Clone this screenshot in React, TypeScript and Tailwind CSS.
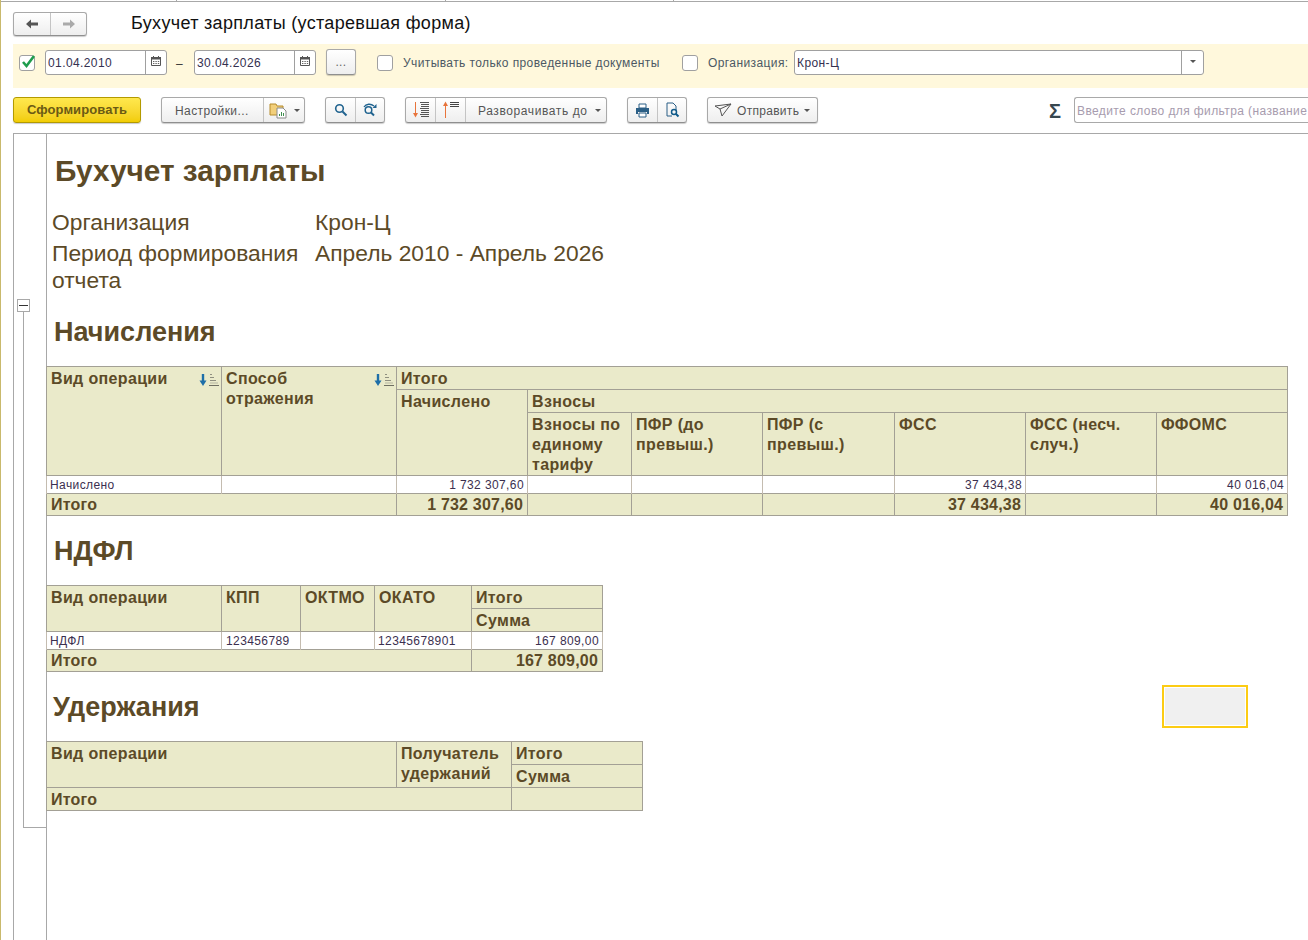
const btn = "flex shrink-0 items-center h-[26px] rounded-[3px] border border-[#a9a9a9] border-b-[#8f8f8f] bg-gradient-to-b from-white to-[#eeeeee] shadow-[0_1px_1px_rgba(0,0,0,0.2)]";
const hcell = "border border-[#a3a095] bg-[#eaeaca] align-top text-left font-bold text-[16px] tracking-[0.35px] leading-[20px] text-[#5c4a27] pl-1 pr-1 pt-[2px]";
const tcell = "border border-[#a3a095] bg-[#eaeaca] font-bold text-[16px] tracking-[0.2px] leading-[20px] text-[#5c4a27] px-1";
const dcell = "border-x border-[#c4bcb0] text-[12px] tracking-[0.4px] leading-[16px] text-[#3b2f4f] px-[3px] py-0";

const Calendar = () => (
  <svg width="12" height="12" viewBox="0 0 12 12">
    <path d="M1.500 2.500h9v8h-9z" fill="#fff" stroke="#555" />
    <path d="M1 2h10v2.500H1z" fill="#555" />
    <path d="M3.500 1v2M8.500 1v2" stroke="#555" />
    <path d="M3 6.500h1.400M5.400 6.500h1.400M7.800 6.500h1.400M3 8.500h1.400M5.400 8.500h1.400M7.800 8.500h1.400" stroke="#666" />
  </svg>
);

const Caret = () => <span className="w-0 h-0 border-x-[3px] border-x-transparent border-t-[3px] border-t-[#555]" />;

const Check = ({ on }: { on?: boolean }) => (
  <span className="relative w-[16px] h-[16px] rounded-[3px] border border-[#a0a0a0] bg-white shrink-0 block">
    {on && (
      <svg width="16" height="15" viewBox="0 0 16 15" className="absolute left-[1px] -top-[2px]">
        <path d="M2 8l3.500 4L13 2" fill="none" stroke="#1f9d4d" strokeWidth="2.600" />
      </svg>
    )}
  </span>
);

const DateField = ({ value }: { value: string }) => (
  <div className="flex shrink-0 w-[122px] h-[25px] rounded-[3px] border border-[#a0a0a0] bg-white text-[12px] tracking-[0.4px] text-[#34304f]">
    <span className="w-[100px] pl-[2px] leading-[24px] border-r border-[#a0a0a0]">{value}</span>
    <span className="flex-1 flex items-center justify-center pb-[3px]"><Calendar /></span>
  </div>
);

const SortDown = () => (
  <svg width="22" height="14" viewBox="0 0 22 14" className="shrink-0 -mr-[3px] mt-[4px]">
    <path d="M5 1v8" stroke="#1e6fa8" strokeWidth="2.400" />
    <path d="M1.500 7.500h7L5 13z" fill="#1e6fa8" />
    <path d="M12 1.500h2M12 4.500h4M12 7.500h6" stroke="#8f8f80" />
    <path d="M11 12.500h10" stroke="#6f6f62" />
    <path d="M12 10h8" stroke="#b5b5a0" />
  </svg>
);

const Heading = ({ children, className }: { children: string; className: string }) => (
  <h2 className={"font-bold text-[#5c4a27] " + className}>{children}</h2>
);

export default function App() {
  return (
    <div className="relative w-[1308px] h-[940px] overflow-hidden bg-white border-l border-[#c9b96c] font-['Liberation_Sans',Arial,sans-serif]">
      {/* top strip */}
      <div className="h-[2px] border-b border-[#a8a8a8] flex">
        <span className="ml-[175px] w-px h-[2px] bg-[#a8a8a8]" />
        <span className="ml-[268px] w-px h-[2px] bg-[#a8a8a8]" />
        <span className="ml-[227px] w-px h-[2px] bg-[#a8a8a8]" />
      </div>

      {/* title row */}
      <div className="flex items-center h-[42px] pl-[12px] pt-[1px]">
        <div className={btn + " w-[74px] !h-[24px]"}>
          <span className="w-[37px] h-full flex items-center justify-center border-r border-[#c4c4c4]">
            <svg width="14" height="10" viewBox="0 0 14 10"><path d="M1 5l5-4.500V3.500h7v3H6v3z" fill="#555" /></svg>
          </span>
          <span className="flex-1 flex items-center justify-center">
            <svg width="14" height="10" viewBox="0 0 14 10"><path d="M13 5L8 .5V3.500H1v3h7v3z" fill="#aaa" /></svg>
          </span>
        </div>
        <h1 className="ml-[44px] text-[18px] tracking-[0.32px] text-[#111]">Бухучет зарплаты (устаревшая форма)</h1>
      </div>

      {/* filter bar */}
      <div className="ml-[12px] h-[44px] bg-[#fff8dc] flex items-start pt-[6px] text-[12px] tracking-[0.4px] text-[#4c5864]">
        <span className="ml-[6px] mt-[5px]"><Check on /></span>
        <span className="ml-[10px]"><DateField value="01.04.2010" /></span>
        <span className="ml-[9px] mt-[5px] w-[18px] text-[#333]">–</span>
        <DateField value="30.04.2026" />
        <button className={btn + " ml-[10px] -mt-[1px] w-[30px] justify-center text-[#666]"}>...</button>
        <span className="ml-[21px] mt-[5px]"><Check /></span>
        <span className="ml-[10px] mt-[4px] w-[258px] shrink-0 whitespace-nowrap">Учитывать только проведенные документы</span>
        <span className="ml-[21px] mt-[5px]"><Check /></span>
        <span className="ml-[10px] mt-[4px] w-[80px] shrink-0 whitespace-nowrap">Организация:</span>
        <div className="ml-[6px] flex shrink-0 w-[410px] h-[25px] rounded-[3px] border border-[#a0a0a0] bg-white text-[#34304f]">
          <span className="w-[387px] pl-[2px] leading-[24px] border-r border-[#a0a0a0]">Крон-Ц</span>
          <span className="flex-1 flex items-center justify-center pb-[2px]"><Caret /></span>
        </div>
      </div>

      {/* toolbar */}
      <div className="ml-[12px] h-[46px] flex items-start pt-[9px] text-[12px] tracking-[0.4px] text-[#555] border-b border-[#a8a8a8] w-[1295px]">
        <button className="w-[128px] shrink-0 h-[26px] rounded-[3px] border border-[#b39a00] bg-gradient-to-b from-[#ffe84d] to-[#f2cd00] shadow-[0_1px_1px_rgba(0,0,0,0.2)] text-[13px] tracking-[0.1px] font-bold text-[#6b5a14]">Сформировать</button>

        <div className={btn + " ml-[20px] w-[144px]"}>
          <span className="w-[102px] h-full border-r border-[#c4c4c4] flex items-center pl-[13px] pt-[1px]">Настройки...</span>
          <span className="flex-1 flex items-center pl-[5px] gap-[7px]">
            <svg width="18" height="18" viewBox="0 0 18 18">
              <path d="M1 3h6l1 2h6v9H1z" fill="#f2cf7a" stroke="#b78c2c" />
              <path d="M8 7h6l3 3v7H8z" fill="#fff" stroke="#8a8a8a" />
              <path d="M10.500 15v-2M12.500 15v-4M14.500 15v-3" stroke="#3f8f4f" />
            </svg>
            <Caret />
          </span>
        </div>

        <div className={btn + " ml-[20px] w-[60px]"}>
          <span className="w-[30px] h-full border-r border-[#c4c4c4] flex items-center justify-center">
            <svg width="14" height="14" viewBox="0 0 14 14"><circle cx="5.500" cy="5.500" r="3.800" fill="none" stroke="#20638f" strokeWidth="1.600" /><path d="M8.500 8.500l4 4" stroke="#20638f" strokeWidth="2" /></svg>
          </span>
          <span className="flex-1 flex items-center justify-center">
            <svg width="16" height="14" viewBox="0 0 16 14"><circle cx="6.500" cy="7" r="3.300" fill="none" stroke="#20638f" strokeWidth="1.500" /><path d="M9 9.500l3 3" stroke="#20638f" strokeWidth="2" /><path d="M2 4C4 .5 9 .5 12 3" fill="none" stroke="#20638f" strokeWidth="1.300" /><path d="M14.500 1v4h-4z" fill="#20638f" /></svg>
          </span>
        </div>

        <div className={btn + " ml-[20px] w-[202px]"}>
          <span className="w-[30px] h-full border-r border-[#c4c4c4] flex items-center justify-center">
            <svg width="22" height="18" viewBox="0 0 22 18">
              <path d="M5.500 1v12" stroke="#e8743b" />
              <path d="M3 12h5l-2.500 4.500z" fill="#e8743b" />
              <path d="M10 1.500h9M11 3.500h8M11 5.500h8M10 7.500h9M11 9.500h8M11 11.500h8M10 13.500h9M11 15.500h8" stroke="#555" />
            </svg>
          </span>
          <span className="w-[30px] h-full border-r border-[#c4c4c4] flex items-start pt-[3px] justify-center">
            <svg width="22" height="18" viewBox="0 0 22 18">
              <path d="M5.500 4v13" stroke="#e8743b" />
              <path d="M3 5h5L5.500 .5z" fill="#e8743b" />
              <path d="M10 1.500h9M10 3.500h9M10 5.500h9" stroke="#444" />
            </svg>
          </span>
          <span className="flex-1 flex items-center pl-[12px] gap-[7px] pt-[1px] tracking-[0.6px]">Разворачивать до <Caret /></span>
        </div>

        <div className={btn + " ml-[20px] w-[60px]"}>
          <span className="w-[30px] h-full border-r border-[#c4c4c4] flex items-center justify-center">
            <svg width="15" height="15" viewBox="0 0 15 15"><path d="M4 1h7v4H4z" fill="#fff" stroke="#2b5f86" /><path d="M1 5h13v6h-2V9H3v2H1z" fill="#2b5f86" /><path d="M4 10h7v4H4z" fill="#fff" stroke="#2b5f86" /></svg>
          </span>
          <span className="flex-1 flex items-center justify-center">
            <svg width="15" height="16" viewBox="0 0 15 16"><path d="M2 1h6l3 3v4M2 1v13h5" fill="none" stroke="#2b5f86" /><circle cx="9" cy="10" r="2.500" fill="none" stroke="#0f5a8a" strokeWidth="1.500" /><path d="M11 12l2.500 2.500" stroke="#0f5a8a" strokeWidth="2" /></svg>
          </span>
        </div>

        <button className={btn + " ml-[20px] w-[111px] pl-[6px] gap-[5px] tracking-[0.3px]"}>
          <svg width="18" height="14" viewBox="0 0 18 14"><path d="M1 3l16-2-9 12-2-7zM6 6l11-5" fill="none" stroke="#555" /></svg>
          <span className="pt-[1px]">Отправить</span>
          <Caret />
        </button>

        <span className="ml-[231px] shrink-0 -mt-[1px] w-[12px] text-[20px] leading-[30px] font-bold text-[#37474f]">Σ</span>
        <div className="ml-[13px] shrink-0 w-[240px] h-[26px] rounded-l-[3px] border border-[#a9a9a9] border-r-0 pl-[2px] leading-[26px] whitespace-nowrap overflow-hidden text-[#a79cae]">Введите слово для фильтра (название</div>
      </div>

      {/* report */}
      <div className="ml-[12px] h-[806px] flex">
        <div className="w-[33px] shrink-0 border-l border-[#a8a8a8] pt-[165px]">
          <div className="ml-[3px] w-[13px] h-[13px] border border-[#a8a8a8] flex items-center justify-center">
            <span className="w-[9px] h-px bg-[#333]" />
          </div>
          <div className="ml-[9px] w-[24px] h-[516px] border-l border-b border-[#a8a8a8]" />
        </div>

        <div className="relative flex-1 border-l border-[#a8a8a8]">
          <h1 className="ml-[8px] mt-[19px] text-[29.800px] leading-[35px] font-bold text-[#5c4a27]">Бухучет зарплаты</h1>
          <div className="ml-[5px] mt-[21px] grid grid-cols-[263px_320px] text-[22.800px] leading-[27px] text-[#5c4a27] gap-y-[4px]">
            <span>Организация</span>
            <span>Крон-Ц</span>
            <span className="w-[250px]">Период формирования отчета</span>
            <span>Апрель 2010 - Апрель 2026</span>
          </div>

          <Heading className="ml-[7px] mt-[22px] text-[27px] leading-[33px]">Начисления</Heading>
          <table className="-ml-px mt-[17px] table-fixed border-collapse w-[1241px]">
            <colgroup>
              <col className="w-[175px]" /><col className="w-[175px]" /><col className="w-[131px]" /><col className="w-[104px]" />
              <col className="w-[131px]" /><col className="w-[132px]" /><col className="w-[131px]" /><col className="w-[131px]" /><col className="w-[131px]" />
            </colgroup>
            <thead>
              <tr className="h-[23px]">
                <th rowSpan={3} className={hcell}><div className="flex justify-between">Вид операции<SortDown /></div></th>
                <th rowSpan={3} className={hcell}><div className="flex justify-between">Способ отражения<SortDown /></div></th>
                <th colSpan={7} className={hcell}>Итого</th>
              </tr>
              <tr className="h-[23px]">
                <th rowSpan={2} className={hcell}>Начислено</th>
                <th colSpan={6} className={hcell}>Взносы</th>
              </tr>
              <tr className="h-[63px]">
                <th className={hcell}>Взносы по единому тарифу</th>
                <th className={hcell}>ПФР (до превыш.)</th>
                <th className={hcell}>ПФР (с превыш.)</th>
                <th className={hcell}>ФСС</th>
                <th className={hcell}>ФСС (несч. случ.)</th>
                <th className={hcell}>ФФОМС</th>
              </tr>
            </thead>
            <tbody>
              <tr className="h-[18px]">
                <td className={dcell}>Начислено</td>
                <td className={dcell} />
                <td className={dcell + " text-right"}>1 732 307,60</td>
                <td className={dcell} /><td className={dcell} /><td className={dcell} />
                <td className={dcell + " text-right"}>37 434,38</td>
                <td className={dcell} />
                <td className={dcell + " text-right"}>40 016,04</td>
              </tr>
              <tr className="h-[22px]">
                <td colSpan={2} className={tcell + " !leading-[18px]"}>Итого</td>
                <td className={tcell + " !leading-[18px] text-right"}>1 732 307,60</td>
                <td className={tcell} /><td className={tcell} /><td className={tcell} />
                <td className={tcell + " !leading-[18px] text-right"}>37 434,38</td>
                <td className={tcell} />
                <td className={tcell + " !leading-[18px] text-right"}>40 016,04</td>
              </tr>
            </tbody>
          </table>

          <Heading className="ml-[7px] mt-[19px] text-[27px] leading-[33px]">НДФЛ</Heading>
          <table className="-ml-px mt-[17px] table-fixed border-collapse w-[556px]">
            <colgroup>
              <col className="w-[175px]" /><col className="w-[79px]" /><col className="w-[74px]" /><col className="w-[97px]" /><col className="w-[131px]" />
            </colgroup>
            <thead>
              <tr className="h-[23px]">
                <th rowSpan={2} className={hcell}>Вид операции</th>
                <th rowSpan={2} className={hcell}>КПП</th>
                <th rowSpan={2} className={hcell}>ОКТМО</th>
                <th rowSpan={2} className={hcell}>ОКАТО</th>
                <th className={hcell}>Итого</th>
              </tr>
              <tr className="h-[23px]"><th className={hcell}>Сумма</th></tr>
            </thead>
            <tbody>
              <tr className="h-[18px]">
                <td className={dcell}>НДФЛ</td>
                <td className={dcell + " pl-[4px]"}>123456789</td>
                <td className={dcell} />
                <td className={dcell}>12345678901</td>
                <td className={dcell + " text-right"}>167 809,00</td>
              </tr>
              <tr className="h-[22px]">
                <td colSpan={4} className={tcell + " !leading-[18px]"}>Итого</td>
                <td className={tcell + " !leading-[18px] text-right"}>167 809,00</td>
              </tr>
            </tbody>
          </table>

          <Heading className="ml-[6px] mt-[19px] text-[27px] leading-[33px]">Удержания</Heading>
          <table className="-ml-px mt-[17px] table-fixed border-collapse w-[596px]">
            <colgroup><col className="w-[350px]" /><col className="w-[115px]" /><col className="w-[131px]" /></colgroup>
            <thead>
              <tr className="h-[23px]">
                <th rowSpan={2} className={hcell}>Вид операции</th>
                <th rowSpan={2} className={hcell}>Получатель удержаний</th>
                <th className={hcell}>Итого</th>
              </tr>
              <tr className="h-[23px]"><th className={hcell}>Сумма</th></tr>
            </thead>
            <tbody>
              <tr className="h-[23px]">
                <td colSpan={2} className={tcell + " pt-[2px] !leading-[18px]"}>Итого</td>
                <td className={tcell} />
              </tr>
            </tbody>
          </table>

          {/* selected cell marker */}
          <div className="absolute left-[1115px] top-[551px] w-[86px] h-[43px] border-2 border-[#fccc14] bg-[#f0f0f0] shadow-[inset_0_0_0_1px_#fff]" />
        </div>
      </div>
    </div>
  );
}
